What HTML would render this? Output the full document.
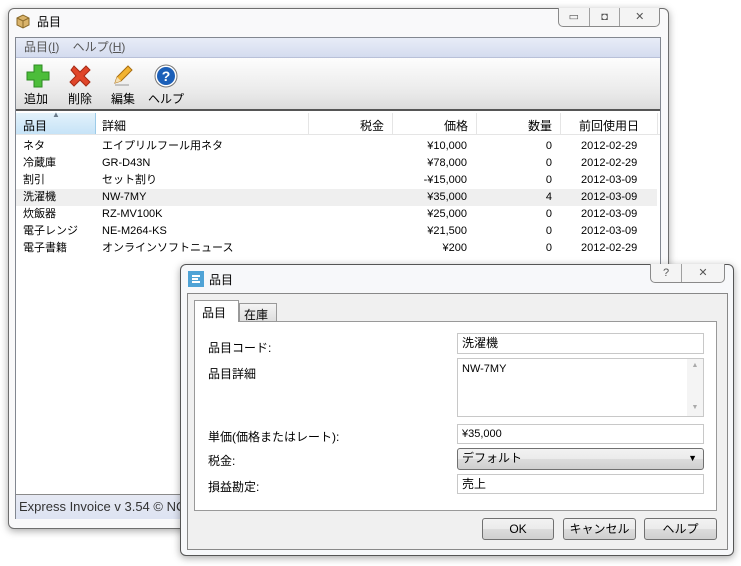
<!DOCTYPE html>
<html><head><meta charset="utf-8"><style>
*{margin:0;padding:0;box-sizing:border-box}
body{width:741px;height:566px;background:#fff;position:relative;overflow:hidden;font-family:"Liberation Sans","Noto Sans CJK JP",sans-serif;font-size:12px;color:#000}
.abs{position:absolute}
.win{border:1px solid #6e6e6e;border-radius:6px;background:#f9f9fa;box-shadow:0 2px 8px rgba(0,0,0,.35)}
.cap{border:1px solid #8a8a8a;border-top:none;border-radius:0 0 5px 5px;background:#f4f4f4;display:flex}
.cap div{flex:1;border-left:1px solid #a0a0a0;text-align:center;color:#555;font-size:11px;line-height:18px}
.cap div:first-child{border-left:none}
.row{position:absolute;left:0;width:641px;height:17px;line-height:17px}
.row span{position:absolute;top:0}
.fld{position:absolute;left:457px;width:247px;background:#fff;border:1px solid #c8c8c8;padding-left:4px;line-height:18px}
.btn{position:absolute;top:518px;height:22px;border:1px solid #707070;border-radius:3px;background:linear-gradient(#f2f2f2,#ebebeb 50%,#dcdcdc 51%,#cfcfcf);text-align:center;line-height:20px}
</style></head><body>
<!-- main window -->
<div class="abs win" style="left:8px;top:8px;width:661px;height:521px"></div>
<svg class="abs" style="left:15px;top:13px" width="16" height="16"><path d="M2 5 L8 2 L14 5 L14 12 L8 15 L2 12Z" fill="#d9b36a" stroke="#8a6a2a"/><path d="M2 5 L8 8 L14 5 M8 8 V15" stroke="#8a6a2a" fill="none"/></svg>
<div class="abs" style="left:37px;top:13px;font-size:12px">品目</div>
<div class="abs cap" style="left:558px;top:8px;width:102px;height:19px"><div>▭</div><div>◘</div><div style="flex:1.3">✕</div></div>
<div class="abs" style="left:15px;top:37px;width:646px;height:482px;border:1px solid #828790;background:#fff"></div>
<div class="abs" style="left:16px;top:38px;width:644px;height:20px;background:linear-gradient(#e8ecf7,#d4dcef);border-bottom:1px solid #b8c0d8;color:#555;line-height:19px;padding-left:8px">品目(<u>I</u>)&nbsp;&nbsp;&nbsp; ヘルプ(<u>H</u>)</div>
<div class="abs" style="left:16px;top:58px;width:644px;height:53px;background:linear-gradient(#fdfdfd,#e9e9e9 70%,#dcdcdc);border-bottom:2px solid #555"></div>
<svg class="abs" style="left:26px;top:64px" width="24" height="24"><path d="M8 1h8v7h7v8h-7v7H8v-7H1V8h7z" fill="#4cbd3a" stroke="#2d8a22"/></svg>
<svg class="abs" style="left:68px;top:64px" width="24" height="24"><path d="M3 6l3-4 6 6 6-6 4 4-6 6 6 6-4 4-6-6-6 6-4-4 6-6z" fill="#e0462a" stroke="#a52a14"/></svg>
<svg class="abs" style="left:111px;top:63px" width="24" height="24"><path d="M4 20l2-6L17 3l4 4L10 18z" fill="#f2b331" stroke="#a86d10"/><path d="M4 20l2-6 4 4z" fill="#f6dfb0"/><path d="M4 22h14" stroke="#999"/></svg>
<svg class="abs" style="left:154px;top:64px" width="24" height="24"><circle cx="12" cy="12" r="11" fill="#fff" stroke="#777"/><circle cx="12" cy="12" r="9" fill="#1b5fb8"/><text x="12" y="17" text-anchor="middle" font-family="Liberation Sans" font-weight="bold" font-size="14" fill="#fff">?</text></svg>
<div class="abs" style="left:24px;top:90px;font-size:12px">追加</div>
<div class="abs" style="left:68px;top:90px">削除</div>
<div class="abs" style="left:111px;top:90px">編集</div>
<div class="abs" style="left:148px;top:90px">ヘルプ</div>
<!-- list header -->
<div class="abs" style="left:16px;top:113px;width:644px;height:22px;background:#fff;border-bottom:1px solid #e5e5e5">
<div class="abs" style="left:0;top:0;width:80px;height:21px;background:linear-gradient(#e3f2fb,#c6e3f7);border-right:1px solid #9ccbe8"></div>
<div class="abs" style="left:7px;top:4px">品目</div><div class="abs" style="left:36px;top:-3px;font-size:8px;color:#6a7b8a">▲</div>
<div class="abs" style="left:86px;top:4px">詳細</div>
<div class="abs" style="left:292px;top:0;width:1px;height:21px;background:#e5e5e5"></div>
<div class="abs" style="left:344px;top:4px">税金</div>
<div class="abs" style="left:376px;top:0;width:1px;height:21px;background:#e5e5e5"></div>
<div class="abs" style="left:428px;top:4px">価格</div>
<div class="abs" style="left:460px;top:0;width:1px;height:21px;background:#e5e5e5"></div>
<div class="abs" style="left:512px;top:4px">数量</div>
<div class="abs" style="left:544px;top:0;width:1px;height:21px;background:#e5e5e5"></div>
<div class="abs" style="left:563px;top:4px">前回使用日</div>
<div class="abs" style="left:641px;top:0;width:1px;height:21px;background:#e5e5e5"></div>
</div>
<div class="abs" style="left:16px;top:138px;width:644px;height:130px;font-size:11px">
<div class="row" style="top:0"><span style="left:7px">ネタ</span><span style="left:86px">エイプリルフール用ネタ</span><span style="right:190px">¥10,000</span><span style="right:105px">0</span><span style="left:565px">2012-02-29</span></div>
<div class="row" style="top:17px"><span style="left:7px">冷蔵庫</span><span style="left:86px">GR-D43N</span><span style="right:190px">¥78,000</span><span style="right:105px">0</span><span style="left:565px">2012-02-29</span></div>
<div class="row" style="top:34px"><span style="left:7px">割引</span><span style="left:86px">セット割り</span><span style="right:190px">-¥15,000</span><span style="right:105px">0</span><span style="left:565px">2012-03-09</span></div>
<div class="row" style="top:51px;background:#efefef"><span style="left:7px">洗濯機</span><span style="left:86px">NW-7MY</span><span style="right:190px">¥35,000</span><span style="right:105px">4</span><span style="left:565px">2012-03-09</span></div>
<div class="row" style="top:68px"><span style="left:7px">炊飯器</span><span style="left:86px">RZ-MV100K</span><span style="right:190px">¥25,000</span><span style="right:105px">0</span><span style="left:565px">2012-03-09</span></div>
<div class="row" style="top:85px"><span style="left:7px">電子レンジ</span><span style="left:86px">NE-M264-KS</span><span style="right:190px">¥21,500</span><span style="right:105px">0</span><span style="left:565px">2012-03-09</span></div>
<div class="row" style="top:102px"><span style="left:7px">電子書籍</span><span style="left:86px">オンラインソフトニュース</span><span style="right:190px">¥200</span><span style="right:105px">0</span><span style="left:565px">2012-02-29</span></div>
</div>
<div class="abs" style="left:16px;top:494px;width:644px;height:25px;background:linear-gradient(#e6e9f3,#dde3f2);border-top:1px solid #8a8a8a;line-height:24px;padding-left:3px;font-size:13px;color:#333;white-space:nowrap;overflow:hidden">Express Invoice v 3.54 © NCH Software</div>

<!-- dialog -->
<div class="abs win" style="left:180px;top:264px;width:554px;height:292px;background:#f7f8fa;border-color:#555"></div>
<svg class="abs" style="left:188px;top:271px" width="16" height="16"><rect x="0" y="0" width="16" height="16" fill="#4fa3d6"/><path d="M4 5h8M4 8h6M4 11h8" stroke="#fff" stroke-width="2"/></svg>
<div class="abs" style="left:209px;top:271px">品目</div>
<div class="abs cap" style="left:650px;top:264px;width:75px;height:19px"><div>?</div><div style="flex:1.4">✕</div></div>
<div class="abs" style="left:187px;top:293px;width:541px;height:257px;background:#f0f0f0;border:1px solid #888"></div>
<div class="abs" style="left:194px;top:321px;width:523px;height:190px;background:#fff;border:1px solid #999"></div>
<div class="abs" style="left:194px;top:300px;width:45px;height:22px;background:#fff;border:1px solid #999;border-bottom:none;padding:3px 0 0 7px">品目</div>
<div class="abs" style="left:239px;top:303px;width:38px;height:18px;background:linear-gradient(#f4f4f4,#dedede);border:1px solid #999;border-bottom:none;padding:2px 0 0 4px">在庫</div>
<div class="abs" style="left:208px;top:339px">品目コード:</div>
<div class="abs" style="left:208px;top:365px">品目詳細</div>
<div class="abs" style="left:208px;top:428px">単価(価格またはレート):</div>
<div class="abs" style="left:208px;top:452px">税金:</div>
<div class="abs" style="left:208px;top:478px">損益勘定:</div>
<div class="fld" style="top:333px;height:21px;line-height:19px">洗濯機</div>
<div class="fld" style="top:358px;height:59px;font-size:11px;line-height:20px">NW-7MY<div class="abs" style="right:0;top:0;width:16px;height:57px;background:#f4f4f4;color:#aaa;font-size:7px;text-align:center;line-height:14px">▲<br><br><br>▼</div></div>
<div class="fld" style="top:424px;height:20px;font-size:11px">¥35,000</div>
<div class="fld" style="top:448px;height:22px;border-color:#707070;border-radius:3px;background:linear-gradient(#f2f2f2,#ebebeb 50%,#dcdcdc 51%,#cfcfcf)">デフォルト<span class="abs" style="right:6px;top:0;font-size:9px">▼</span></div>
<div class="fld" style="top:474px;height:20px">売上</div>
<div class="btn" style="left:482px;width:72px">OK</div>
<div class="btn" style="left:563px;width:73px">キャンセル</div>
<div class="btn" style="left:644px;width:73px">ヘルプ</div>
</body></html>
